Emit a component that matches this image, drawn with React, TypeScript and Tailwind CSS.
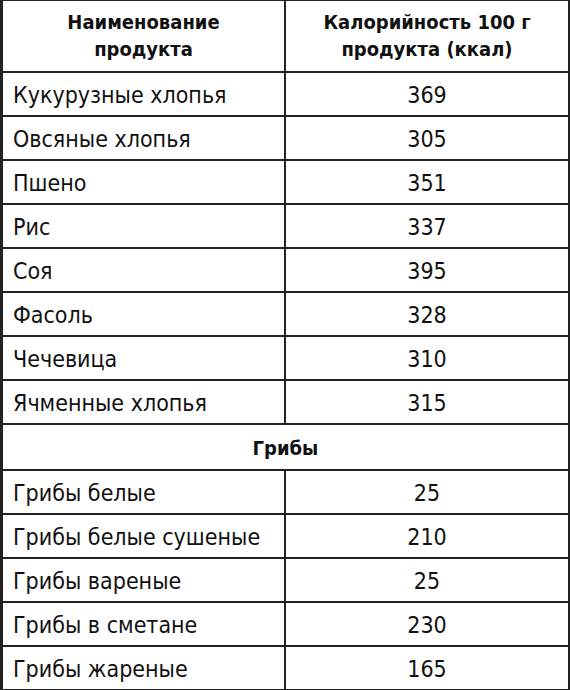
const rows: [string, string][] = [
  ["Кукурузные хлопья", "369"],
  ["Овсяные хлопья", "305"],
  ["Пшено", "351"],
  ["Рис", "337"],
  ["Соя", "395"],
  ["Фасоль", "328"],
  ["Чечевица", "310"],
  ["Ячменные хлопья", "315"],
];

const mushrooms: [string, string][] = [
  ["Грибы белые", "25"],
  ["Грибы белые сушеные", "210"],
  ["Грибы вареные", "25"],
  ["Грибы в сметане", "230"],
  ["Грибы жареные", "165"],
];

function Row({ name, kcal, last }: { name: string; kcal: string; last?: boolean }) {
  return (
    <div className={`flex ${last ? "h-[42px]" : "h-[44px] border-b-2 border-[#222]"}`}>
      <div className="w-[283px] border-r-2 border-[#222] flex items-center pl-[10px] pt-[3px]">{name}</div>
      <div className="flex-1 flex items-center justify-center pt-[3px]">{kcal}</div>
    </div>
  );
}

export default function App() {
  return (
    <div
      className="w-[570px] h-[690px] bg-white text-[#111] text-[23px] leading-none"
      style={{ fontFamily: '"DejaVu Sans Condensed", "Liberation Sans", sans-serif' }}
    >
      <div className="w-[570px] border-l-[3px] border-r-2 border-t border-b-2 border-[#222]">
        <div className="flex h-[72px] border-b-2 border-[#222] font-bold text-[20px] leading-[27px]">
          <div className="w-[283px] border-r-2 border-[#222] flex items-center justify-center text-center">
            Наименование
            <br />
            продукта
          </div>
          <div className="flex-1 flex items-center justify-center text-center">
            Калорийность 100 г
            <br />
            продукта (ккал)
          </div>
        </div>
        {rows.map(([n, k]) => (
          <Row key={n} name={n} kcal={k} />
        ))}
        <div className="h-[46px] border-b-2 border-[#222] flex items-center justify-center font-bold text-[20px] pt-[2px]">
          Грибы
        </div>
        {mushrooms.map(([n, k], i) => (
          <Row key={n} name={n} kcal={k} last={i === mushrooms.length - 1} />
        ))}
      </div>
    </div>
  );
}
